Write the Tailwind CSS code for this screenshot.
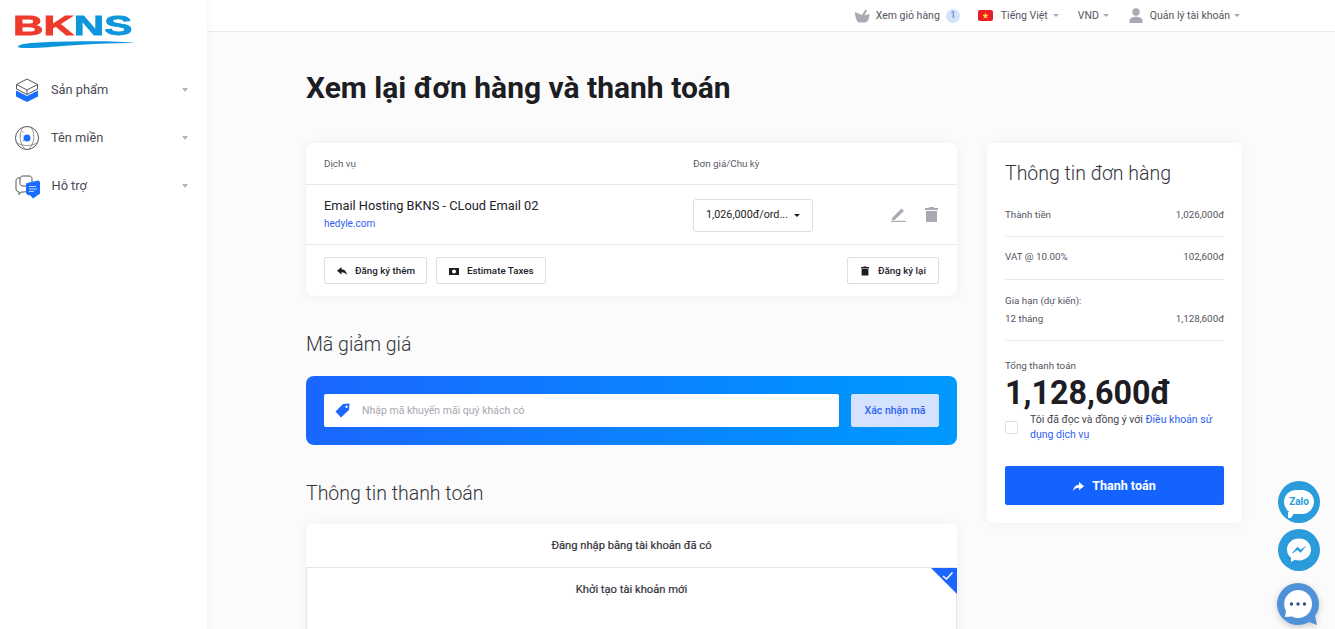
<!DOCTYPE html>
<html lang="vi">
<head>
  <meta charset="UTF-8" />
  <title>Xem lại đơn hàng và thanh toán</title>
  <script src="https://cdn.jsdelivr.net/npm/@tailwindcss/browser@4"></script>
</head>
<body class="bg-[#fbfbfb] font-['Roboto',sans-serif] text-[#1d1d24] h-[629px] overflow-hidden">
<div class="flex h-[629px] overflow-hidden">

  <!-- sidebar -->
  <aside class="w-[207px] shrink-0 bg-white shadow-[0_0_8px_rgba(0,0,0,0.06)] z-10">
    <div class="h-[66px] pl-[13px] pt-[13px]">
      <div class="relative h-[40px] w-[120px]">
        <div class="font-['Liberation_Sans',sans-serif] font-bold text-[27px] leading-[27px] origin-left scale-x-[1.56] w-max [-webkit-text-stroke:0.8px_currentColor]"><span class="text-[#ee3a2b]">BK</span><span class="text-[#0d96dc]">NS</span></div>
        <svg class="absolute left-[4px] top-[27px]" width="118" height="9" viewBox="0 0 118 9"><path d="M1 7C1 3 20 2 55 1.500C85 1 105 1.500 118 3C95 3 70 4 45 6C25 8 2 9 1 7Z" fill="#0d96dc"/></svg>
      </div>
    </div>
    <nav class="text-[12.800px] text-[#4a4a55]">
      <div class="h-[48px] flex items-center pl-[15px] pr-[19px]">
        <svg class="w-[24px] h-[24px] shrink-0" viewBox="0 0 24 24"><path d="M1 12.500L12 18L23 12.500V18.500L12 24L1 18.500Z" fill="#1a6dff"/><path d="M1.500 6.500V11L12 16.500L22.500 11V6.500" fill="#fff" stroke="#55555d" stroke-width="1"/><path d="M12 1L22.500 6.500L12 12L1.500 6.500Z" fill="#fff" stroke="#55555d" stroke-width="1"/><path d="M12 12V16.500" stroke="#55555d" stroke-width="1"/></svg>
        <span class="ml-[12px] flex-1">Sản phẩm</span>
        <span class="w-0 h-0 border-x-[3px] border-x-transparent border-t-[4px] border-t-[#b5b5bd]"></span>
      </div>
      <div class="h-[48px] flex items-center pl-[15px] pr-[19px]">
        <svg class="w-[24px] h-[24px] shrink-0" viewBox="0 0 24 24" fill="none" stroke="#44444c" stroke-width="0.900"><circle cx="12" cy="12" r="11.500"/><path d="M1.500 16.500C7 20.500 17 20.500 22.500 16.500M8 1.500C3.500 7 4.500 18 10 23M16 1.500C20.500 7 19.500 18 14 23" stroke-opacity="0.600"/><path d="M4.500 10H6M7 6H8.500M7.500 14.500H9" stroke="#8a8a94"/><circle cx="12" cy="12" r="3.500" fill="#1a6dff" stroke="none"/></svg>
        <span class="ml-[12px] flex-1">Tên miền</span>
        <span class="w-0 h-0 border-x-[3px] border-x-transparent border-t-[4px] border-t-[#b5b5bd]"></span>
      </div>
      <div class="h-[48px] flex items-center pl-[15px] pr-[19px]">
        <svg class="w-[25px] h-[25px] shrink-0 -ml-[0.500px]" viewBox="0 0 25 25" fill="none"><path d="M3.500 4H9C11 4 12 5 12 7V15C12 17 11 18 9 18H6L4 20.500V18C2 17.500 1 16.500 1 15V7C1 5 2 4 3.500 4Z" fill="#fff" stroke="#44444c" stroke-width="0.900"/><path d="M8 2H14C16 2 17 3 17 5V12H8C6 12 5 11 5 9.500V5C5 3 6 2 8 2Z" fill="#fff" stroke="#44444c" stroke-width="0.900"/><path d="M12 9L23 6.500C24 6.500 25 7.500 25 8.500V19C25 20 24 20.500 23 21L18 24.500L15.500 21.500C13 21.500 11 20.500 11 18.500V11C11 10 11 9 12 9Z" fill="#1a6dff"/><path d="M14 12.500H21M14 15H22M14 17.500H19" stroke="#cfe0ff" stroke-width="0.900"/></svg>
        <span class="ml-[12px] flex-1">Hỗ trợ</span>
        <span class="w-0 h-0 border-x-[3px] border-x-transparent border-t-[4px] border-t-[#b5b5bd]"></span>
      </div>
    </nav>
  </aside>

  <div class="flex-1 min-w-0">
    <!-- top bar -->
    <header class="h-[32px] bg-white border-b border-[#ececec] flex items-center justify-end pr-[95px] text-[10.500px] text-[#55555f]">
      <svg class="w-[16px] h-[14px]" viewBox="0 0 16 14"><path d="M1 3L8 6L11.500 .5L13 1.500L10.500 6.500L15.500 5C15.500 10 13 13.500 11 13.500H5C3 13.500 1 8 1 3Z" fill="#a9a9b3"/></svg>
      <span class="ml-[6px]">Xem giỏ hàng</span>
      <span class="ml-[6px] w-[14px] h-[14px] rounded-full bg-[#d5e2fb] text-[#3e6fd8] text-[9.500px] flex items-center justify-center">1</span>
      <svg class="ml-[18px] w-[15px] h-[11px] rounded-[2px]" viewBox="0 0 15 11"><rect width="15" height="11" fill="#ea1c24"/><path d="M7.500 2.200L8.300 4.700H10.900L8.800 6.200L9.600 8.700L7.500 7.200L5.400 8.700L6.200 6.200L4.100 4.700H6.700Z" fill="#ffd83b"/></svg>
      <span class="ml-[8px]">Tiếng Việt</span>
      <span class="ml-[5px] w-0 h-0 border-x-[3px] border-x-transparent border-t-[3px] border-t-[#a9a9b3]"></span>
      <span class="ml-[19px]">VND</span>
      <span class="ml-[4px] w-0 h-0 border-x-[3px] border-x-transparent border-t-[3px] border-t-[#a9a9b3]"></span>
      <svg class="ml-[20px] w-[14px] h-[15px]" viewBox="0 0 14 15"><circle cx="7" cy="4" r="3.700" fill="#a9a9b3"/><path d="M0.500 15V12.500C0.500 10 4 8.800 7 8.800C10 8.800 13.500 10 13.500 12.500V15Z" fill="#a9a9b3"/></svg>
      <span class="ml-[7px]">Quản lý tài khoản</span>
      <span class="ml-[4px] w-0 h-0 border-x-[3px] border-x-transparent border-t-[3px] border-t-[#a9a9b3]"></span>
    </header>

    <main class="pl-[99px]">
      <h1 class="text-[30px] leading-[40px] font-bold text-[#1d1d24] mt-[36px]">Xem lại đơn hàng và thanh toán</h1>

      <div class="flex items-start gap-[30px] mt-[35px]">
        <div class="w-[651px] shrink-0">
          <!-- order table -->
          <section class="bg-white rounded-[8px] shadow-[0_0_12px_rgba(0,0,0,0.05)]">
            <div class="h-[42px] pt-[1px] border-b border-[#e9e9e9] flex items-center pl-[18px] text-[9.800px] text-[#5c5c68]">
              <span class="w-[369px]">Dịch vụ</span>
              <span>Đơn giá/Chu kỳ</span>
            </div>
            <div class="h-[60px] border-b border-[#e9e9e9] flex items-center pl-[18px] pr-[18px]">
              <div class="w-[369px]">
                <p class="text-[12.800px] leading-[16px] mb-[3px] text-[#22222a]">Email Hosting BKNS - CLoud Email 02</p>
                <a class="text-[10px] leading-[14px] block text-[#2f62f0]">hedyle.com</a>
              </div>
              <div class="w-[120px] h-[33px] mt-[1px] border border-[#dfdfe3] rounded-[3px] flex items-center pl-[12px] pr-[12px] text-[10.800px] text-[#1d1d24]">
                <span class="flex-1">1,026,000đ/ord...</span>
                <span class="w-0 h-0 border-x-[3px] border-x-transparent border-t-[3px] border-t-[#1d1d24]"></span>
              </div>
              <svg class="ml-auto w-[15px] h-[15px] -translate-x-[1px]" viewBox="0 0 15 15"><path d="M1 11L10.500 1.500L13 4L3.500 13H1Z" fill="#a9a9b3"/><rect x="0" y="13.800" width="15" height="1.200" fill="#a9a9b3"/></svg>
              <svg class="ml-[19px] w-[13px] h-[15px] -translate-x-[1px]" viewBox="0 0 13 15"><path d="M4.500 0H8.500L9.500 1H13V3H0V1H3.500Z M1 4H12V15H1Z" fill="#a9a9b3"/></svg>
            </div>
            <div class="h-[51px] flex items-center pl-[18px] pr-[18px] text-[9.800px] font-medium text-[#22222a]">
              <button class="h-[27px] w-[103px] pt-[1px] border border-[#dfdfe3] rounded-[2px] flex items-center pl-[12px]">
                <svg class="w-[10px] h-[8px] mr-[8px]" viewBox="0 0 10 8"><path d="M4.500 0V2.300C8 2.500 9.500 5 10 8C8.500 6 7 5.200 4.500 5.200V7.500L0 3.800Z" fill="#1d1d24"/></svg>
                Đăng ký thêm
              </button>
              <button class="ml-[9px] h-[27px] w-[110px] pt-[1px] border border-[#dfdfe3] rounded-[2px] flex items-center pl-[12px]">
                <svg class="w-[10px] h-[7px] mr-[8px]" viewBox="0 0 10 7"><path fill-rule="evenodd" d="M0 0H10V7H0Z M5 1.500A2 2 0 1 0 5 5.500A2 2 0 1 0 5 1.500Z" fill="#1d1d24"/></svg>
                Estimate Taxes
              </button>
              <button class="ml-auto h-[27px] w-[92px] pt-[1px] border border-[#dfdfe3] rounded-[2px] flex items-center pl-[13px]">
                <svg class="w-[8px] h-[10px] mr-[9px]" viewBox="0 0 13 15"><path d="M4.500 0H8.500L9.500 1H13V3H0V1H3.500Z M1 4H12V15H1Z" fill="#1d1d24"/></svg>
                Đăng ký lại
              </button>
            </div>
          </section>

          <h2 class="text-[19.500px] leading-[26px] font-light text-[#33333b] mt-[36px]">Mã giảm giá</h2>

          <!-- coupon -->
          <section class="mt-[18px] h-[69px] rounded-[8px] bg-gradient-to-r from-[#1a66ff] to-[#0099ff] flex items-center px-[18px] gap-[12px]">
            <div class="h-[33px] flex-1 bg-white rounded-[2px] flex items-center pl-[11px] text-[10.500px] text-[#a7a7b0]">
              <svg class="w-[15px] h-[15px] mr-[12px]" viewBox="0 0 15 15"><path fill-rule="evenodd" d="M8 1L14.500 .5L14 7L6 14.500L.5 8.500Z M11.500 2.500A1.200 1.200 0 1 0 11.500 4.900A1.200 1.200 0 1 0 11.500 2.500Z" fill="#1a66ff"/></svg>
              Nhập mã khuyến mãi quý khách có
            </div>
            <button class="w-[88px] h-[33px] bg-[#d4e2fd] rounded-[2px] text-[10.500px] font-medium text-[#2f62f0]">Xác nhận mã</button>
          </section>

          <h2 class="text-[19.500px] leading-[26px] font-light text-[#33333b] mt-[36px]">Thông tin thanh toán</h2>

          <!-- login / register tabs -->
          <section class="mt-[17px] bg-white rounded-t-[6px] shadow-[0_0_12px_rgba(0,0,0,0.05)] text-[11.200px] text-[#33333b] text-center [-webkit-text-stroke:0.2px_currentColor]">
            <div class="h-[44px] pt-[1px] flex items-center justify-center border-b border-[#e6e6e6]">Đăng nhập bằng tài khoản đã có</div>
            <div class="relative h-[80px] pt-[14px] border-x border-[#e6e6e6]">
              Khởi tạo tài khoản mới
              <svg class="absolute -right-px top-0 w-[26px] h-[26px]" viewBox="0 0 26 26"><path d="M0 0H26V26Z" fill="#1a66ff"/><path d="M12 8L15.500 11L21.500 4.500" fill="none" stroke="#fff" stroke-width="1.600"/></svg>
            </div>
          </section>
        </div>

        <!-- summary -->
        <aside class="w-[255px] h-[380px] bg-white rounded-[6px] shadow-[0_0_12px_rgba(0,0,0,0.05)] px-[18px] pt-[18px] text-[9.800px] text-[#55555f]">
          <h3 class="text-[19.500px] leading-[26px] font-light text-[#33333b]">Thông tin đơn hàng</h3>
          <div class="mt-[13px] h-[37px] border-b border-[#e9e9e9] flex justify-between pt-[8px]"><span>Thành tiền</span><span>1,026,000đ</span></div>
          <div class="h-[43px] border-b border-[#e9e9e9] flex justify-between pt-[13px]"><span>VAT @ 10.00%</span><span>102,600đ</span></div>
          <div class="h-[61px] border-b border-[#e9e9e9] pt-[15px]">
            <p class="leading-[12px]">Gia hạn (dự kiến):</p>
            <div class="flex justify-between leading-[12px] mt-[6px]"><span>12 tháng</span><span>1,128,600đ</span></div>
          </div>
          <p class="mt-[19px] leading-[12px]">Tổng thanh toán</p>
          <p class="text-[32.300px] leading-[36px] font-bold text-[#1d1d24] mt-[3px]">1,128,600đ</p>
          <div class="flex items-center mt-[1px]">
            <span class="w-[13px] h-[13px] border border-[#dfdfe3] rounded-[2px] shrink-0"></span>
            <p class="ml-[12px] text-[10.500px] leading-[15px] text-[#44444c]">Tôi đã đọc và đồng ý với <a class="text-[#2f62f0]">Điều khoản sử dụng dịch vụ</a></p>
          </div>
          <button class="mt-[24px] pt-[1px] w-full h-[39px] bg-[#1463ff] rounded-[2px] text-white text-[12.500px] font-bold flex items-center justify-center">
            <svg class="w-[11px] h-[9px] mr-[8px]" viewBox="0 0 10 8"><path d="M5.500 0V2.300C2 2.500 .5 5 0 8C1.500 6 3 5.200 5.500 5.200V7.500L10 3.800Z" fill="#fff"/></svg>
            Thanh toán
          </button>
        </aside>
      </div>
    </main>
  </div>
</div>

<!-- floating chat buttons -->
<div class="absolute right-[15px] top-[481px] w-[42px] h-[42px] rounded-full bg-[#2a9bdb] flex items-center justify-center">
  <div class="relative w-[30px] h-[24px] bg-white rounded-[12px] flex items-center justify-center text-[10px] font-bold text-[#2a9bdb] leading-none mb-[1px]">Zalo<span class="absolute left-[4px] -bottom-[4px] w-0 h-0 border-l-[3px] border-l-white border-r-[4px] border-r-transparent border-t-[6px] border-t-white"></span></div>
</div>
<div class="absolute right-[15px] top-[529px] w-[42px] h-[42px] rounded-full bg-[#2a9bdb] flex items-center justify-center">
  <svg class="w-[30px] h-[30px]" viewBox="0 0 30 30"><path d="M15 3.500C8 3.500 3 8.300 3 14.500C3 18 4.500 20.800 7 22.700V27L11 24.800C12.300 25.200 13.600 25.400 15 25.400C22 25.400 27 20.600 27 14.500C27 8.300 22 3.500 15 3.500Z" fill="#fff"/><path d="M8.500 18L13.500 12L16.500 15L21.500 11.500L16.500 17.500L13.500 14.800Z" fill="#2a9bdb" stroke="#2a9bdb" stroke-width="0.600"/></svg>
</div>
<svg class="absolute right-[15px] top-[582px] w-[44px] h-[44px] drop-shadow-[0_2px_3px_rgba(0,0,0,0.2)]" viewBox="0 0 44 44">
  <path d="M22 1A21 21 0 0 0 22 43C26 43 30 42 33 40L41 43L39 34C42 30 43 26 43 22A21 21 0 0 0 22 1Z" fill="#4f92d9"/>
  <path d="M22 8A14 14 0 0 0 10 29L9 35L16 34.500C18 35.500 20 36 22 36A14 14 0 0 0 22 8Z" fill="#fff"/>
  <circle cx="15.500" cy="22" r="1.700" fill="#33527e"/><circle cx="22" cy="22" r="1.700" fill="#33527e"/><circle cx="28.500" cy="22" r="1.700" fill="#33527e"/>
</svg>
</body>
</html>
